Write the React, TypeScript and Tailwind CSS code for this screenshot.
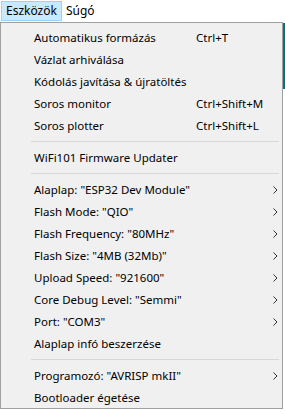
import React from "react";

type Item = { label: string; shortcut?: string; sub?: boolean } | "sep";

const items: Item[] = [
  { label: "Automatikus formázás", shortcut: "Ctrl+T" },
  { label: "Vázlat arhiválása" },
  { label: "Kódolás javítása & újratöltés" },
  { label: "Soros monitor", shortcut: "Ctrl+Shift+M" },
  { label: "Soros plotter", shortcut: "Ctrl+Shift+L" },
  "sep",
  { label: "WiFi101 Firmware Updater" },
  "sep",
  { label: 'Alaplap: "ESP32 Dev Module"', sub: true },
  { label: 'Flash Mode: "QIO"', sub: true },
  { label: 'Flash Frequency: "80MHz"', sub: true },
  { label: 'Flash Size: "4MB (32Mb)"', sub: true },
  { label: 'Upload Speed: "921600"', sub: true },
  { label: 'Core Debug Level: "Semmi"', sub: true },
  { label: 'Port: "COM3"', sub: true },
  { label: "Alaplap infó beszerzése" },
  "sep",
  { label: 'Programozó: "AVRISP mkII"', sub: true },
  { label: "Bootloader égetése" },
];

function Chevron() {
  return (
    <svg width="5" height="8" viewBox="0 0 5 8" className="shrink-0">
      <path d="M0.5 0.5 L4 4 L0.5 7.5" fill="none" stroke="#333" strokeWidth="1" />
    </svg>
  );
}

export default function App() {
  return (
    <div
      className="w-[285px] h-[414px] bg-white overflow-hidden text-[11.5px] text-black"
      style={{ fontFamily: '"Noto Sans", "Open Sans", sans-serif' }}
    >
      <div className="h-[22px] flex items-stretch bg-white text-[12px]">
        <div className="mt-[1px] mb-[1px] ml-[1px] px-[4px] flex items-center bg-[#cce8ff] border border-[#99d1ff] leading-none">
          Eszközök
        </div>
        <div className="px-[4px] flex items-center leading-none">Súgó</div>
      </div>
      <div className="flex">
        <div className="w-[283px] h-[387px] bg-[#f0f0f0] border border-[#a0a0a0] pt-[3px]">
          {items.map((it, i) =>
            it === "sep" ? (
              <div key={i} className="h-[10px] flex items-center pl-[30px] pr-[3px]">
                <div className="h-px w-full bg-[#d7d7d7]" />
              </div>
            ) : (
              <div key={i} className="h-[22px] flex items-center pl-[33px] pr-[4px] pt-[2px]">
                <span className="whitespace-nowrap">{it.label}</span>
                <div className="flex-1" />
                {it.shortcut && (
                  <span className="whitespace-nowrap w-[82px]">{it.shortcut}</span>
                )}
                {it.sub && <Chevron />}
              </div>
            )
          )}
        </div>
        <div className="w-[2px] pt-[1px]">
          <div className="h-[66px] bg-[#00757a]" />
        </div>
      </div>
    </div>
  );
}
